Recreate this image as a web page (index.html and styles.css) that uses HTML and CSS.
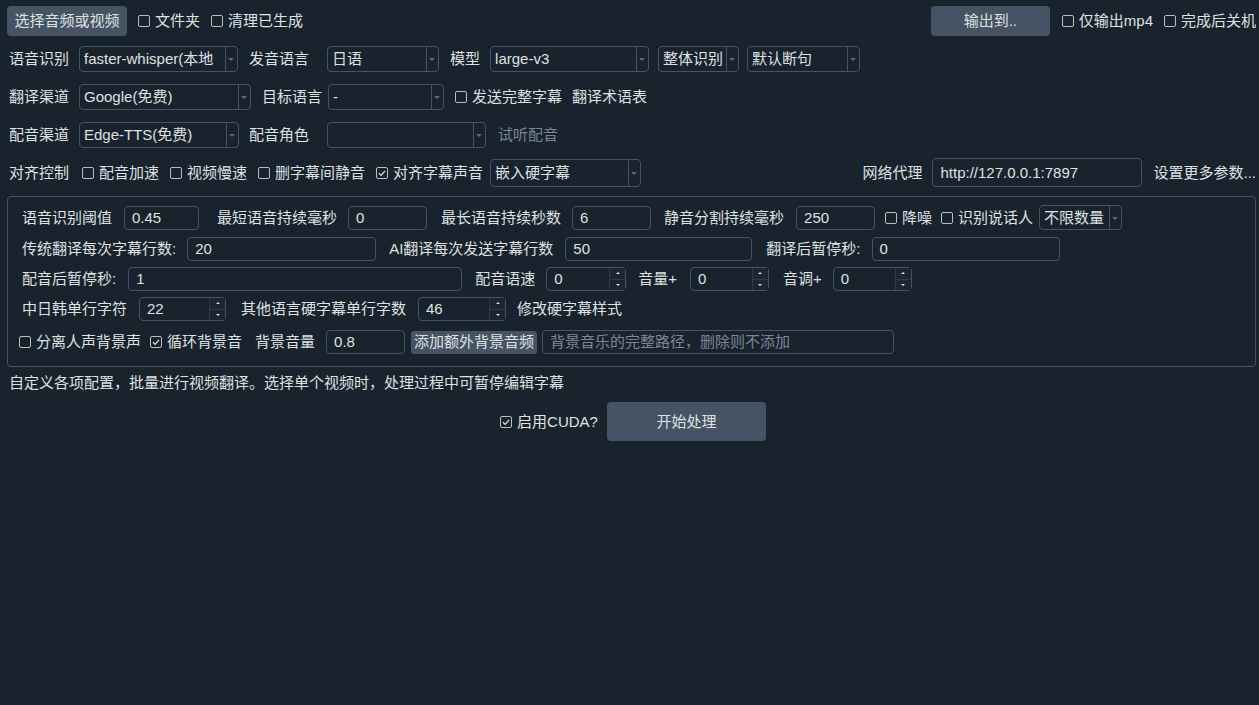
FILE: index.html
```html
<!DOCTYPE html>
<html lang="zh-CN">
<head>
<meta charset="utf-8">
<title>视频翻译</title>
<link rel="stylesheet" href="styles.css">
</head>
<body>
<div class="app">

  <div class="row r1">
    <div class="btn w120">选择音频或视频</div>
    <label class="cb ml11"><span class="box"></span>文件夹</label>
    <label class="cb ml11"><span class="box"></span>清理已生成</label>
    <div class="right">
      <div class="btn w119">输出到..</div>
      <label class="cb ml12"><span class="box"></span>仅输出mp4</label>
      <label class="cb ml11"><span class="box"></span>完成后关机</label>
    </div>
  </div>

  <div class="row r2">
    <span class="lbl ml2">语音识别</span>
    <div class="combo ml10 w159"><span class="ct">faster-whisper(本地</span><span class="arr"></span></div>
    <span class="lbl ml11">发音语言</span>
    <div class="combo ml18 w112"><span class="ct">日语</span><span class="arr"></span></div>
    <span class="lbl ml11">模型</span>
    <div class="combo ml10 w159"><span class="ct">large-v3</span><span class="arr"></span></div>
    <div class="combo ml9 w81"><span class="ct">整体识别</span><span class="arr"></span></div>
    <div class="combo ml8 w113"><span class="ct">默认断句</span><span class="arr"></span></div>
  </div>

  <div class="row r3">
    <span class="lbl ml2">翻译渠道</span>
    <div class="combo ml10 w172"><span class="ct">Google(免费)</span><span class="arr"></span></div>
    <span class="lbl ml11">目标语言</span>
    <div class="combo ml6 w116"><span class="ct">-</span><span class="arr"></span></div>
    <label class="cb ml11"><span class="box"></span>发送完整字幕</label>
    <span class="lbl ml10">翻译术语表</span>
  </div>

  <div class="row r4">
    <span class="lbl ml2">配音渠道</span>
    <div class="combo ml10 w160"><span class="ct">Edge-TTS(免费)</span><span class="arr"></span></div>
    <span class="lbl ml10">配音角色</span>
    <div class="combo ml18 w159"><span class="ct"></span><span class="arr"></span></div>
    <span class="lbl dis ml12">试听配音</span>
  </div>

  <div class="row r5">
    <span class="lbl ml2">对齐控制</span>
    <label class="cb ml13"><span class="box"></span>配音加速</label>
    <label class="cb ml11"><span class="box"></span>视频慢速</label>
    <label class="cb ml11"><span class="box"></span>删字幕间静音</label>
    <label class="cb ml11"><span class="box on"><svg viewBox="0 0 10 10" width="10" height="10"><path d="M2 5.2 L4.2 7.4 L8 2.8" fill="none" stroke="#dfe1e2" stroke-width="1.3"/></svg></span>对齐字幕声音</label>
    <div class="combo ml7 w151 h28"><span class="ct">嵌入硬字幕</span><span class="arr"></span></div>
    <div class="right">
      <span class="lbl">网络代理</span>
      <div class="inp ml10 w210 h29">http://127.0.0.1:7897</div>
      <span class="lbl ml11">设置更多参数...</span>
    </div>
  </div>

  <div class="group">
    <div class="row ga">
      <span class="lbl">语音识别阈值</span>
      <div class="inp ml12 w75">0.45</div>
      <span class="lbl ml18">最短语音持续毫秒</span>
      <div class="inp ml11 w79">0</div>
      <span class="lbl ml14">最长语音持续秒数</span>
      <div class="inp ml11 w79">6</div>
      <span class="lbl ml13">静音分割持续毫秒</span>
      <div class="inp ml12 w79">250</div>
      <label class="cb ml10"><span class="box"></span>降噪</label>
      <label class="cb ml9"><span class="box"></span>识别说话人</label>
      <div class="combo ml6 w83 h25"><span class="ct">不限数量</span><span class="arr"></span></div>
    </div>
    <div class="row gb">
      <span class="lbl">传统翻译每次字幕行数:</span>
      <div class="inp ml11 w189">20</div>
      <span class="lbl ml13">AI翻译每次发送字幕行数</span>
      <div class="inp ml12 w187">50</div>
      <span class="lbl ml14">翻译后暂停秒:</span>
      <div class="inp ml11 w188">0</div>
    </div>
    <div class="row gc">
      <span class="lbl">配音后暂停秒:</span>
      <div class="inp ml12 w334">1</div>
      <span class="lbl ml13">配音语速</span>
      <div class="spin ml11 w80"><span class="st">0</span><span class="sbs"><span class="sb up"></span><span class="sb dn"></span></span></div>
      <span class="lbl ml12">音量+</span>
      <div class="spin ml13 w79"><span class="st">0</span><span class="sbs"><span class="sb up"></span><span class="sb dn"></span></span></div>
      <span class="lbl ml14">音调+</span>
      <div class="spin ml11 w79"><span class="st">0</span><span class="sbs"><span class="sb up"></span><span class="sb dn"></span></span></div>
    </div>
    <div class="row gd">
      <span class="lbl">中日韩单行字符</span>
      <div class="spin ml12 w87"><span class="st">22</span><span class="sbs"><span class="sb up"></span><span class="sb dn"></span></span></div>
      <span class="lbl ml15">其他语言硬字幕单行字数</span>
      <div class="spin ml12 w88"><span class="st">46</span><span class="sbs"><span class="sb up"></span><span class="sb dn"></span></span></div>
      <span class="lbl ml11">修改硬字幕样式</span>
    </div>
    <div class="row ge">
      <label class="cb mln3"><span class="box"></span>分离人声背景声</label>
      <label class="cb ml9"><span class="box on"><svg viewBox="0 0 10 10" width="10" height="10"><path d="M2 5.2 L4.2 7.4 L8 2.8" fill="none" stroke="#dfe1e2" stroke-width="1.3"/></svg></span>循环背景音</label>
      <span class="lbl ml13">背景音量</span>
      <div class="inp ml11 w79">0.8</div>
      <div class="sbtn ml6 w126">添加额外背景音频</div>
      <div class="inp ph ml5 w352">背景音乐的完整路径，删除则不添加</div>
    </div>
  </div>

  <div class="hint">自定义各项配置，批量进行视频翻译。选择单个视频时，处理过程中可暂停编辑字幕</div>

  <div class="row bottom">
    <label class="cb"><span class="box on"><svg viewBox="0 0 10 10" width="10" height="10"><path d="M2 5.2 L4.2 7.4 L8 2.8" fill="none" stroke="#dfe1e2" stroke-width="1.3"/></svg></span>启用CUDA?</label>
    <div class="btn big ml9 w159">开始处理</div>
  </div>

</div>
</body>
</html>
```

FILE: styles.css
```css
* { box-sizing: border-box; }
html, body {
  margin: 0;
  padding: 0;
  background: #19232d;
}
body {
  width: 1259px;
  height: 705px;
  overflow: hidden;
  color: #dfe1e2;
  font-family: "Liberation Sans", "Noto Sans CJK SC", sans-serif;
  font-size: 15px;
  line-height: 18px;
}
.app {
  padding: 6px 3px 0 7px;
}
.row {
  display: flex;
  align-items: center;
  white-space: nowrap;
}
.right {
  margin-left: auto;
  display: flex;
  align-items: center;
}
.r1 { height: 30px; margin-bottom: 10px; }
.r2 { height: 26px; margin-bottom: 12px; }
.r3 { height: 26px; margin-bottom: 12px; }
.r4 { height: 26px; margin-bottom: 10px; }
.r5 { height: 29px; margin-bottom: 9px; }

.lbl { display: inline-block; }
.dis { color: #788592; }

.btn {
  height: 30px;
  background: #455364;
  border-radius: 4px;
  display: flex;
  align-items: center;
  justify-content: center;
  color: #dfe1e2;
}
.btn.big { height: 39px; }

.cb {
  display: inline-flex;
  align-items: center;
}
.box {
  width: 12px;
  height: 12px;
  border: 1px solid #b9bec2;
  border-radius: 2px;
  margin-right: 5px;
  display: inline-flex;
  align-items: center;
  justify-content: center;
  background: #19232d;
}
.box svg { display: block; }

.combo {
  height: 26px;
  border: 1px solid #455364;
  border-radius: 4px;
  display: flex;
  align-items: stretch;
  overflow: hidden;
}
.combo .ct {
  flex: 1;
  padding-left: 4px;
  display: flex;
  align-items: center;
  overflow: hidden;
}
.combo .arr {
  width: 12px;
  border-left: 1px solid #455364;
  position: relative;
}
.combo .arr::after {
  content: "";
  position: absolute;
  left: 2px;
  top: 50%;
  margin-top: -1px;
  border-left: 3px solid transparent;
  border-right: 3px solid transparent;
  border-top: 3px solid #5d6975;
}

.inp {
  height: 24px;
  border: 1px solid #455364;
  border-radius: 4px;
  padding-left: 7px;
  display: flex;
  align-items: center;
  overflow: hidden;
}
.inp.ph { color: #7c8793; }

.spin {
  height: 24px;
  border: 1px solid #455364;
  border-radius: 4px;
  display: flex;
  align-items: stretch;
}
.spin .st {
  flex: 1;
  padding-left: 7px;
  display: flex;
  align-items: center;
}
.sbs {
  width: 16px;
  display: flex;
  flex-direction: column;
}
.sb {
  flex: 1;
  background: #1b2631;
  border-left: 1px solid #2e3b49;
  position: relative;
}
.sb.up { border-bottom: 1px solid #2e3b49; }
.sb::after {
  content: "";
  position: absolute;
  left: 50%;
  top: 50%;
  margin-left: -2px;
  border-left: 2px solid transparent;
  border-right: 2px solid transparent;
}
.sb.up::after { border-bottom: 2px solid #dfe1e2; margin-top: -1px; }
.sb.dn::after { border-top: 2px solid #dfe1e2; margin-top: -1px; }

.sbtn {
  height: 23px;
  background: #455364;
  border-radius: 3px;
  display: flex;
  align-items: center;
  justify-content: center;
}

.group {
  height: 171px;
  border: 1px solid #455364;
  border-radius: 4px;
  padding: 8px 0 0 14px;
}
.ga { height: 25px; margin-bottom: 7px; }
.gb { height: 24px; margin-bottom: 6px; }
.gc { height: 24px; margin-bottom: 6px; }
.gd { height: 24px; margin-bottom: 9px; }
.ge { height: 24px; }

.hint {
  margin: 6px 0 0 2px;
  height: 20px;
  line-height: 20px;
}
.bottom {
  margin-top: 9px;
  height: 39px;
  justify-content: center;
  padding-left: 3px;
}

.h25 { height: 25px; }
.h28 { height: 28px; }
.h29 { height: 29px; }

.ml2 { margin-left: 2px; }
.ml5 { margin-left: 5px; }
.ml6 { margin-left: 6px; }
.ml7 { margin-left: 7px; }
.ml8 { margin-left: 8px; }
.ml9 { margin-left: 9px; }
.ml10 { margin-left: 10px; }
.ml11 { margin-left: 11px; }
.ml12 { margin-left: 12px; }
.ml13 { margin-left: 13px; }
.ml14 { margin-left: 14px; }
.ml15 { margin-left: 15px; }
.ml18 { margin-left: 18px; }
.mln3 { margin-left: -3px; }

.w75 { width: 75px; }
.w79 { width: 79px; }
.w80 { width: 80px; }
.w81 { width: 81px; }
.w83 { width: 83px; }
.w87 { width: 87px; }
.w88 { width: 88px; }
.w112 { width: 112px; }
.w113 { width: 113px; }
.w116 { width: 116px; }
.w119 { width: 119px; }
.w120 { width: 120px; }
.w126 { width: 126px; }
.w151 { width: 151px; }
.w159 { width: 159px; }
.w160 { width: 160px; }
.w172 { width: 172px; }
.w187 { width: 187px; }
.w188 { width: 188px; }
.w189 { width: 189px; }
.w210 { width: 210px; }
.w334 { width: 334px; }
.w352 { width: 352px; }
```
